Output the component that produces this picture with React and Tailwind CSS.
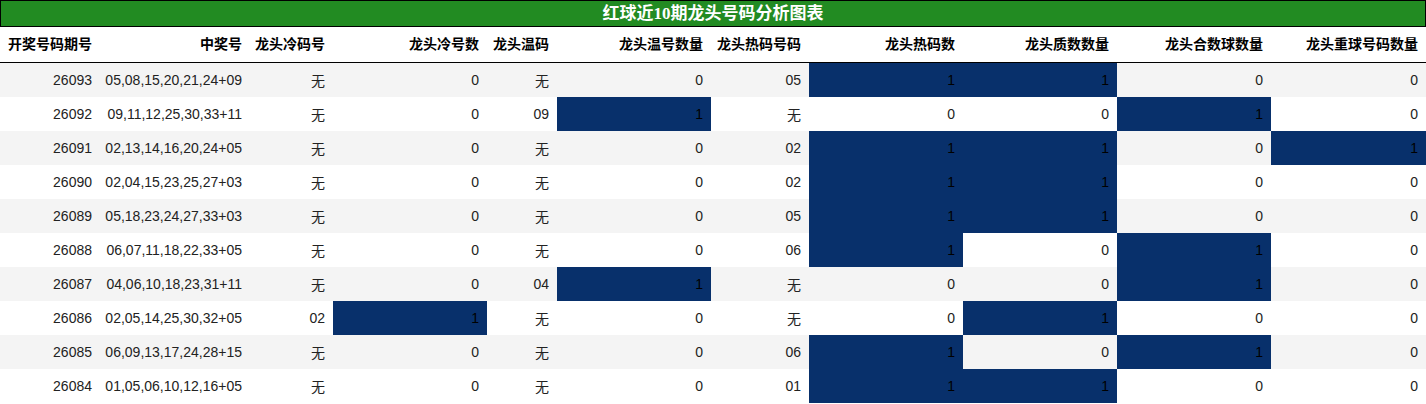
import React from "react";

const headers = [
  "开奖号码期号",
  "中奖号",
  "龙头冷码号",
  "龙头冷号数",
  "龙头温码",
  "龙头温号数量",
  "龙头热码号码",
  "龙头热码数",
  "龙头质数数量",
  "龙头合数球数量",
  "龙头重球号码数量",
];

const rows = [
  ["26093", "05,08,15,20,21,24+09", "无", 0, "无", 0, "05", 1, 1, 0, 0],
  ["26092", "09,11,12,25,30,33+11", "无", 0, "09", 1, "无", 0, 0, 1, 0],
  ["26091", "02,13,14,16,20,24+05", "无", 0, "无", 0, "02", 1, 1, 0, 1],
  ["26090", "02,04,15,23,25,27+03", "无", 0, "无", 0, "02", 1, 1, 0, 0],
  ["26089", "05,18,23,24,27,33+03", "无", 0, "无", 0, "05", 1, 1, 0, 0],
  ["26088", "06,07,11,18,22,33+05", "无", 0, "无", 0, "06", 1, 0, 1, 0],
  ["26087", "04,06,10,18,23,31+11", "无", 0, "04", 1, "无", 0, 0, 1, 0],
  ["26086", "02,05,14,25,30,32+05", "02", 1, "无", 0, "无", 0, 1, 0, 0],
  ["26085", "06,09,13,17,24,28+15", "无", 0, "无", 0, "06", 1, 0, 1, 0],
  ["26084", "01,05,06,10,12,16+05", "无", 0, "无", 0, "01", 1, 1, 0, 0],
];

const cols =
  "grid grid-cols-[100px_150px_83px_154px_70px_154px_98px_154px_154px_154px_155px]";

export default function App() {
  return (
    <div className="w-[1426px] h-[404px] bg-white overflow-hidden" style={{ fontFamily: '"Liberation Sans", "Noto Sans CJK SC", sans-serif' }}>
      <div
        className="h-[27px] bg-[#228b22] border border-black flex items-center justify-center text-white font-bold text-[17px] leading-none"
        style={{ fontFamily: '"Liberation Serif", "Noto Sans CJK SC", serif' }}
      >
        红球近10期龙头号码分析图表
      </div>
      <div className={`${cols} h-[36px] border-b border-black`}>
        {headers.map((h, i) => (
          <div
            key={i}
            className={`flex items-center ${i === 0 ? "justify-start" : "justify-end"} px-2 text-[14px] font-bold text-black whitespace-nowrap`}
          >
            {h}
          </div>
        ))}
      </div>
      {rows.map((r, ri) => (
        <div key={ri} className={`${cols} h-[34px] ${ri % 2 === 0 ? "bg-[#f4f4f4]" : "bg-white"}`}>
          {r.map((v, ci) => {
            const hl = typeof v === "number" && v === 1;
            return (
              <div
                key={ci}
                className={`flex items-center justify-end px-2 text-[14px] whitespace-nowrap ${hl ? "bg-[#08306b] text-black" : "text-[#222222]"}`}
              >
                <span className={v === "无" ? "pt-[3px]" : ""}>{v}</span>
              </div>
            );
          })}
        </div>
      ))}
    </div>
  );
}
